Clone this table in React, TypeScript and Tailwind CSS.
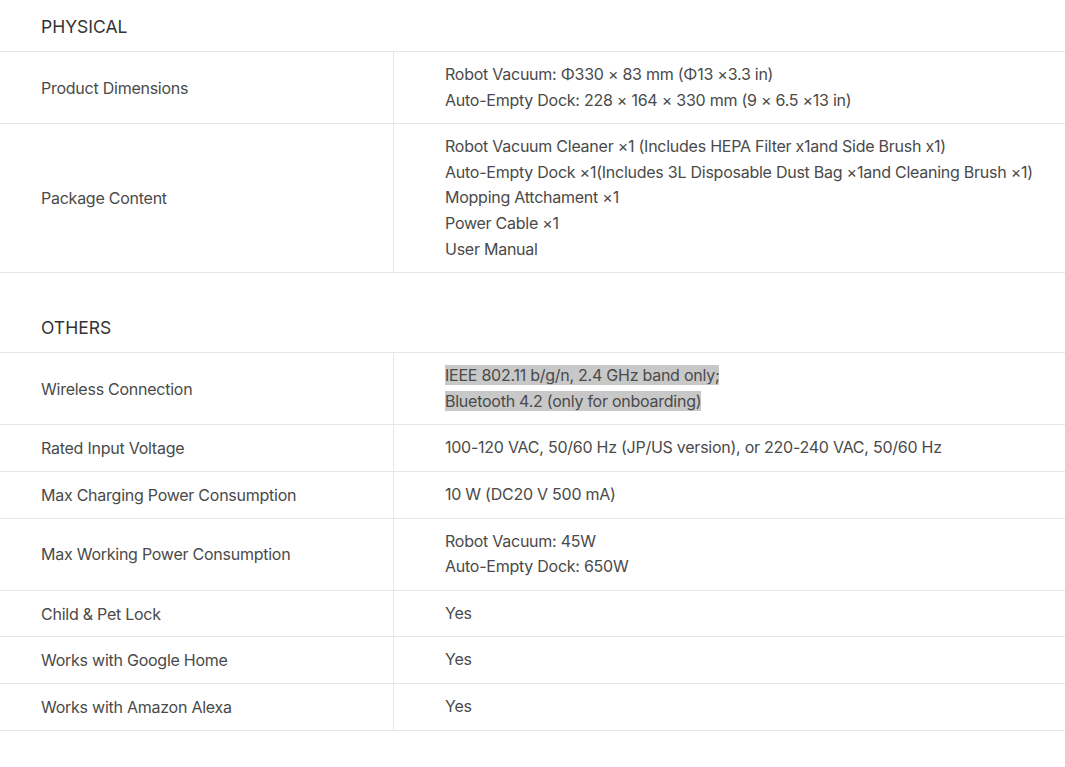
import React from 'react';

interface Spec {
  label: string;
  values: string[];
  highlight?: boolean;
}

interface Section {
  title: string;
  specs: Spec[];
}

const sections: Section[] = [
  {
    title: 'PHYSICAL',
    specs: [
      {
        label: 'Product Dimensions',
        values: ['Robot Vacuum: Φ330 × 83 mm (Φ13 ×3.3 in)', 'Auto-Empty Dock: 228 × 164 × 330 mm (9 × 6.5 ×13 in)'],
      },
      {
        label: 'Package Content',
        values: [
          'Robot Vacuum Cleaner ×1 (Includes HEPA Filter x1and Side Brush x1)',
          'Auto-Empty Dock ×1(Includes 3L Disposable Dust Bag ×1and Cleaning Brush ×1)',
          'Mopping Attchament ×1',
          'Power Cable ×1',
          'User Manual',
        ],
      },
    ],
  },
  {
    title: 'OTHERS',
    specs: [
      {
        label: 'Wireless Connection',
        values: ['IEEE 802.11 b/g/n, 2.4 GHz band only;', 'Bluetooth 4.2 (only for onboarding)'],
        highlight: true,
      },
      { label: 'Rated Input Voltage', values: ['100-120 VAC, 50/60 Hz (JP/US version), or 220-240 VAC, 50/60 Hz'] },
      { label: 'Max Charging Power Consumption', values: ['10 W (DC20 V 500 mA)'] },
      { label: 'Max Working Power Consumption', values: ['Robot Vacuum: 45W', 'Auto-Empty Dock: 650W'] },
      { label: 'Child & Pet Lock', values: ['Yes'] },
      { label: 'Works with Google Home', values: ['Yes'] },
      { label: 'Works with Amazon Alexa', values: ['Yes'] },
    ],
  },
];

const App: React.FC = () => {
  return (
    <div className="min-h-screen bg-white text-[#4a4a4a] text-[16px] tracking-[-0.25px] font-['Inter','Liberation_Sans',sans-serif]">
      {sections.map((section, i) => (
        <div key={section.title} className={i > 0 ? 'mt-[28px]' : ''}>
          <div className="h-[52px] pt-[3px] flex items-center pl-[41px] text-[17.5px] tracking-normal text-[#333] border-b border-[#e6e6ea]">
            {section.title}
          </div>
          {section.specs.map((spec) => (
            <div key={spec.label} className="grid grid-cols-[394px_1fr] border-b border-[#e6e6ea]">
              <div className="flex items-center pl-[41px] border-r border-[#e6e6ea]">{spec.label}</div>
              <div className="pl-[51px] py-[10px] leading-[25.6px]">
                {spec.values.map((v) => (
                  <div key={v}>
                    {spec.highlight ? <span className="bg-[#c8c8c8]">{v}</span> : v}
                  </div>
                ))}
              </div>
            </div>
          ))}
        </div>
      ))}
    </div>
  );
};

export default App;
